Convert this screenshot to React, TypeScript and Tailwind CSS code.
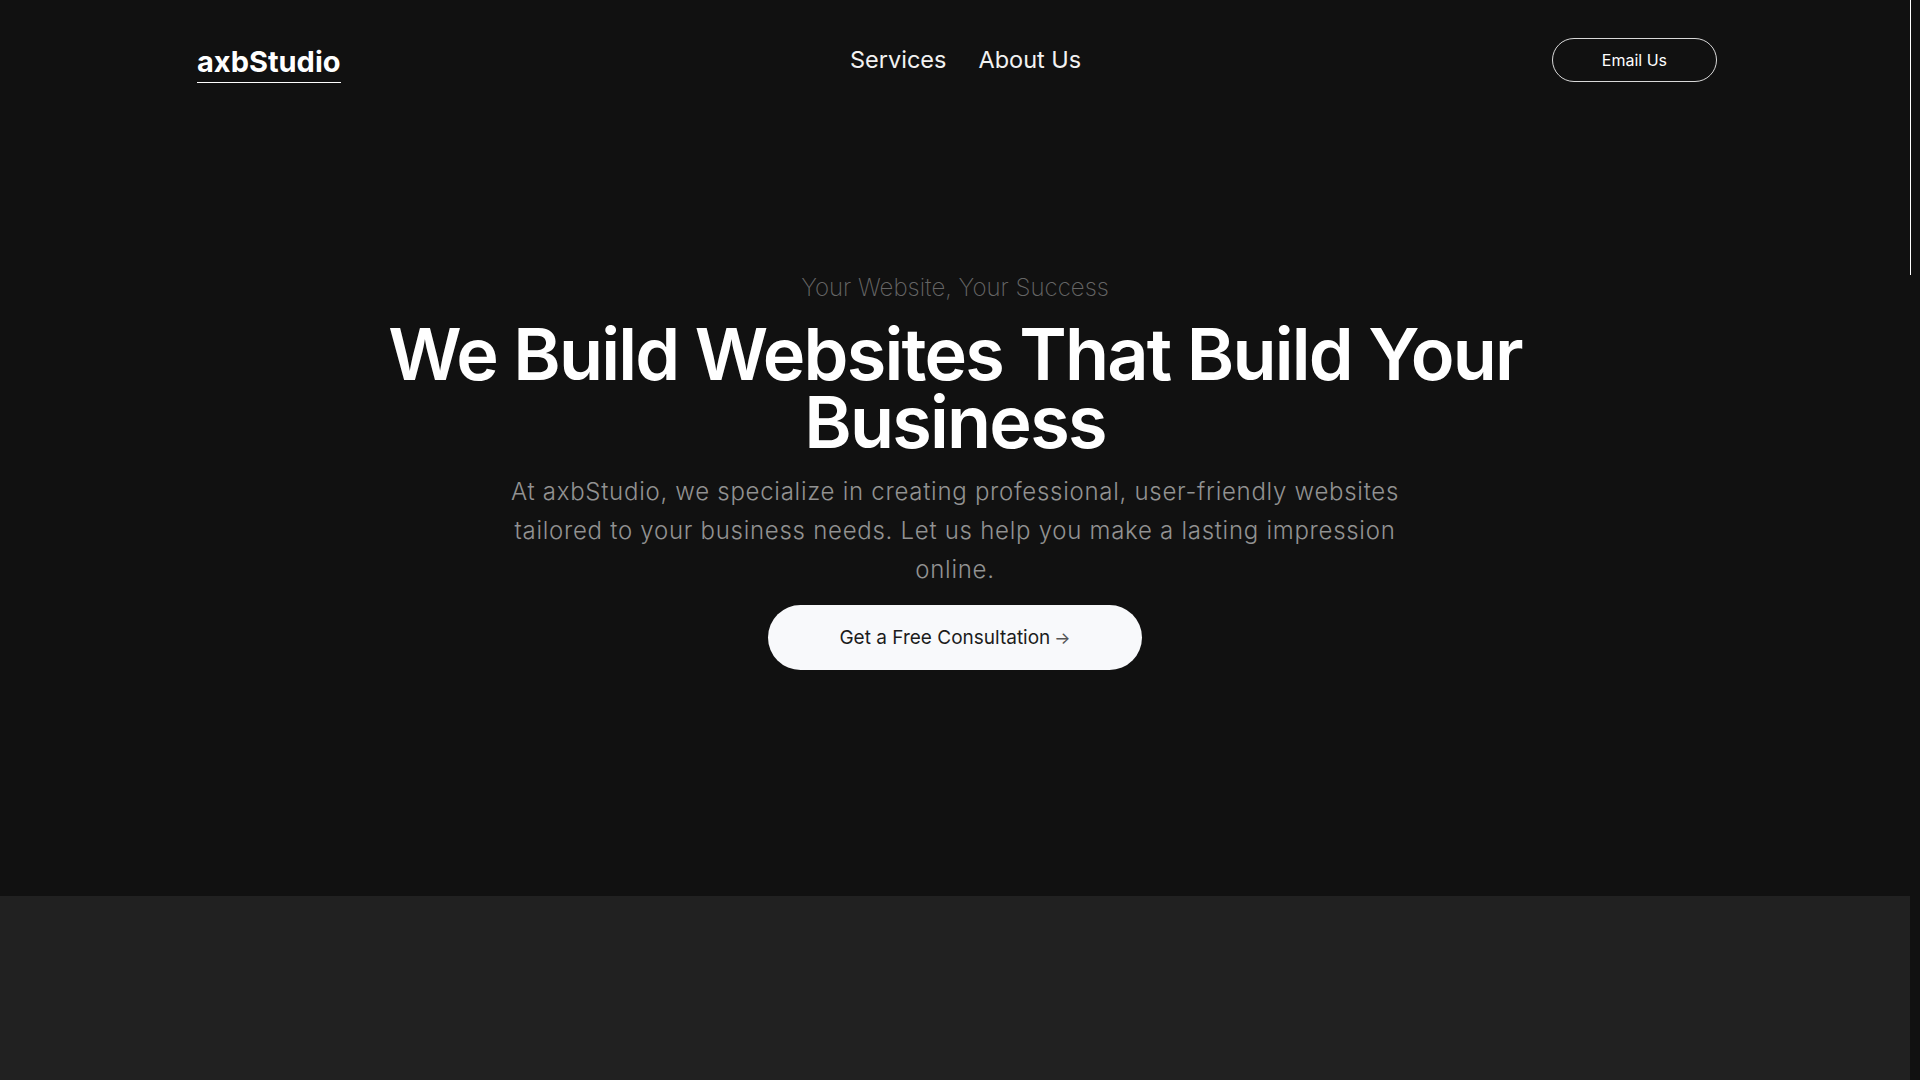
const NAV_LINKS = ['Services', 'About Us'];

function Header() {
  return (
    <header className="h-[120px] w-full">
      <div className="mx-auto flex h-full max-w-[1520px] items-center justify-between">
        <a
          href="#"
          className="ml-[2px] mt-[6px] border-b border-white pb-[2px] text-[29px] font-bold leading-9 text-white"
        >
          axbStudio
        </a>
        <nav className="ml-[39px] flex items-center gap-8">
          {NAV_LINKS.map((label) => (
            <a key={label} href="#" className="text-[23.5px] font-normal text-[#f2f2f2]">
              {label}
            </a>
          ))}
        </nav>
        <a
          href="#"
          className="mr-[-2px] rounded-full border border-[#d9d9d9] px-[49px] py-[9px] text-base text-white"
        >
          Email Us
        </a>
      </div>
    </header>
  );
}

function Hero() {
  return (
    <section className="flex flex-col items-center pt-[152px] text-center">
      <p className="text-2xl font-extralight text-[#666666]">Your Website, Your Success</p>
      <h1 className="mt-4 max-w-[1200px] text-[72px] font-semibold leading-[68px] tracking-tight text-white">
        We Build Websites That Build Your Business
      </h1>
      <p className="mt-4 max-w-[920px] text-2xl font-light leading-[39px] tracking-[0.03em] text-[#929292]">
        At axbStudio, we specialize in creating professional, user-friendly websites tailored
        to your business needs. Let us help you make a lasting impression online.
      </p>
      <a
        href="#"
        className="mt-4 inline-flex h-[65px] w-[374px] items-center justify-center rounded-full bg-[#f8f9fb] pt-[2px] text-[19px] text-[#1c1c1c]"
      >
        Get a Free Consultation <span className="ml-1 text-[17px] text-[#555]">→</span>
      </a>
    </section>
  );
}

// the shot shows a thin dark scrollbar down the right edge
function ScrollStrip() {
  return (
    <div className="fixed right-0 top-0 h-screen w-[10px] bg-[#111111]">
      <div className="h-[275px] w-full border-l border-white bg-[#111111]" />
    </div>
  );
}

export default function App() {
  return (
    <div className="min-h-screen bg-[#111111] font-['Inter',sans-serif]">
      <main className="mr-[10px]">
        <div className="h-[896px] bg-[#111111]">
          <Header />
          <Hero />
        </div>
        {/* next section, still empty in the shot */}
        <div className="h-[3344px] bg-[#212121]" />
      </main>
      <ScrollStrip />
    </div>
  );
}
